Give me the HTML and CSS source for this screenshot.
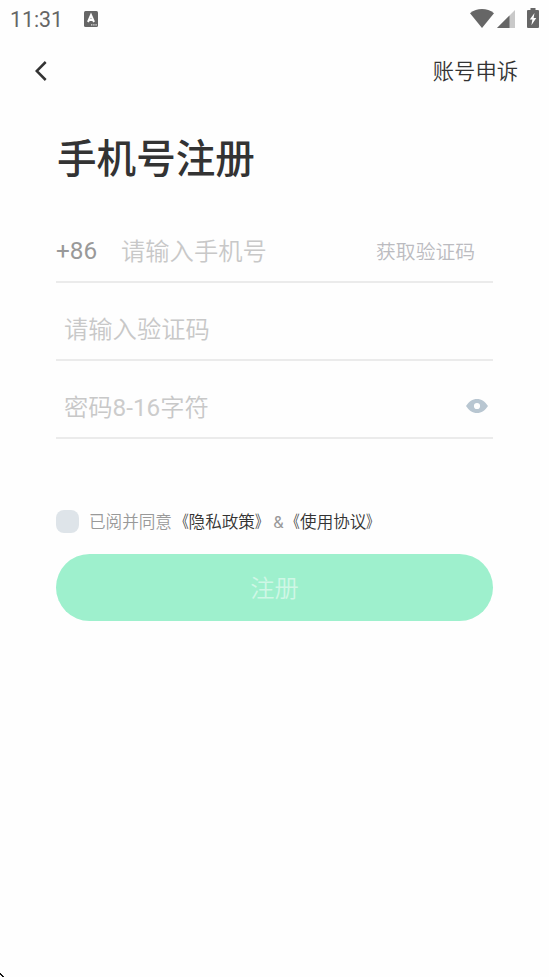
FILE: index.html
```html
<!DOCTYPE html>
<html lang="zh-CN">
<head>
<meta charset="utf-8">
<title>手机号注册</title>
<link rel="stylesheet" href="styles.css">
</head>
<body>
<div class="screen">
  <header class="status">
    <span class="clock">11:31</span>
    <svg class="ime" width="14" height="16" viewBox="0 0 14 16"><rect width="14" height="16" rx="1.5" fill="#666"/><path d="M4 11L7 4L10 11M5 9H9" fill="none" stroke="#fff" stroke-width="2"/><path d="M7 13.8H13" stroke="#ddd" stroke-width="1.2" stroke-dasharray="1.4 .8"/></svg>
    <span class="grow"></span>
    <svg class="wifi" width="24" height="19" viewBox="0 0 24 19"><path d="M0 4.2C7-1.4 17-1.4 24 4.2L12 19Z" fill="#666"/></svg>
    <svg class="signal" width="18" height="18" viewBox="0 0 18 18"><path d="M0 18L18 0V18Z" fill="#c9c9c9"/><path d="M0 18L12.5 5.5V18Z" fill="#666"/></svg>
    <svg class="battery" width="12" height="20" viewBox="0 0 12 20"><path d="M3.5 0H8.5V2H11Q12 2 12 3V19Q12 20 11 20H1Q0 20 0 19V3Q0 2 1 2H3.5Z" fill="#666"/><path d="M7.500 5L2.800 11.600H5.400L4.400 17.200L9.300 10.100H6.600Z" fill="#fff"/></svg>
  </header>
  <nav class="nav">
    <svg width="12" height="20" viewBox="0 0 12 20"><path d="M10.7 1L1.7 10L10.7 19" fill="none" stroke="#333" stroke-width="2.5"/></svg>
    <span class="appeal">账号申诉</span>
  </nav>
  <main class="form">
    <h1 class="title">手机号注册</h1>
    <div class="field phone">
      <span class="prefix">+86</span>
      <span class="hint">请输入手机号</span>
      <span class="code">获取验证码</span>
    </div>
    <div class="field"><span class="hint">请输入验证码</span></div>
    <div class="field">
      <span class="hint">密码<span class="num">8-16</span>字符</span>
      <svg class="eye" width="22" height="14" viewBox="0 0 22 14"><path fill-rule="evenodd" d="M0 7C3 2.400 6.500 0 11 0S19 2.400 22 7C19 11.600 15.500 14 11 14S3 11.600 0 7ZM11 3.900A3.100 3.100 0 1 0 11 10.100A3.100 3.100 0 1 0 11 3.900Z" fill="#b8c6d1"/></svg>
    </div>
    <div class="agree">
      <span class="check"></span>
      <span class="terms">已阅并同意<b><span class="open">《</span>隐私政策<span class="close">》</span></b><i>&amp;</i><b><span class="open">《</span>使用协议<span class="close">》</span></b></span>
    </div>
    <div class="submit">注册</div>
  </main>
  <svg class="corner" width="4" height="4" viewBox="0 0 4 4" shape-rendering="crispEdges"><path d="M0 0H1V1H2V2H3V3H4V4H2V3H1V2H0Z" fill="#111"/></svg>
</div>
</body>
</html>
```
FILE: styles.css
```css
* { box-sizing: border-box; }
body { margin: 0; background: #fff; }
svg { display: block; flex: none; }
.screen {
  position: relative;
  width: 549px;
  height: 977px;
  overflow: hidden;
  background: #fefefe;
  font-family: Roboto, "Noto Sans CJK SC", sans-serif;
  font-weight: 350;
  white-space: nowrap;
}
.status { display: flex; align-items: center; height: 38px; padding: 0 10px; }
.clock { width: 74px; padding-top: 1px; font-size: 21.3px; line-height: 38px; font-weight: 400; color: #666; }
.grow { flex: 1; }
.wifi { margin: -1px 3px 0 0; }
.signal { margin-right: 12px; }
.battery { margin: -3px 0 0; }
.nav { display: flex; justify-content: space-between; align-items: center; height: 66px; padding: 0 31px 0 35px; }
.appeal { padding-top: 2px; font-size: 21.3px; line-height: 30px; color: #333; }
.form { padding: 0 56px; }
.title { margin: 23px 0 0 1px; height: 60px; padding-top: 3px; font-size: 39.6px; line-height: 60px; font-weight: 500; color: #333; }
.field { display: flex; align-items: center; height: 78px; padding: 14px 5px 0 8px; border-bottom: 2px solid #ebebeb; }
.phone { height: 96px; padding: 32px 18px 0 0; }
.prefix { width: 65px; padding-top: 1px; font-size: 24.3px; font-weight: 400; color: #999; }
.hint { flex: 1; padding-top: 3px; font-size: 24.3px; line-height: 36px; color: #c8c8c8; }
.num { font-weight: 400; color: #ccc; }
.code { padding-top: 1px; font-size: 19.8px; color: #bbbbc0; }
.agree { display: flex; align-items: center; height: 24px; margin-top: 70px; }
.check { width: 23px; height: 23px; margin-right: 10px; border-radius: 8px; background: #dee4e9; }
.terms { padding-top: 3px; font-size: 16.6px; line-height: 24px; color: #999; }
.terms b { font-weight: inherit; color: #333; }
.terms i { margin: 0 0 0 1.6px; font-style: normal; font-weight: 400; }
.open, .close { display: inline-block; }
.open { transform: scaleX(0.78); transform-origin: 105% 50%; }
.close { transform: scaleX(0.78); transform-origin: 0 50%; }
.submit { height: 67px; margin-top: 21px; padding-top: 1px; border-radius: 34px; background: #9ef0cd; color: #cff7e6; font-size: 24.3px; line-height: 67px; text-align: center; }
.corner { position: absolute; left: 0; bottom: 0; }
```
